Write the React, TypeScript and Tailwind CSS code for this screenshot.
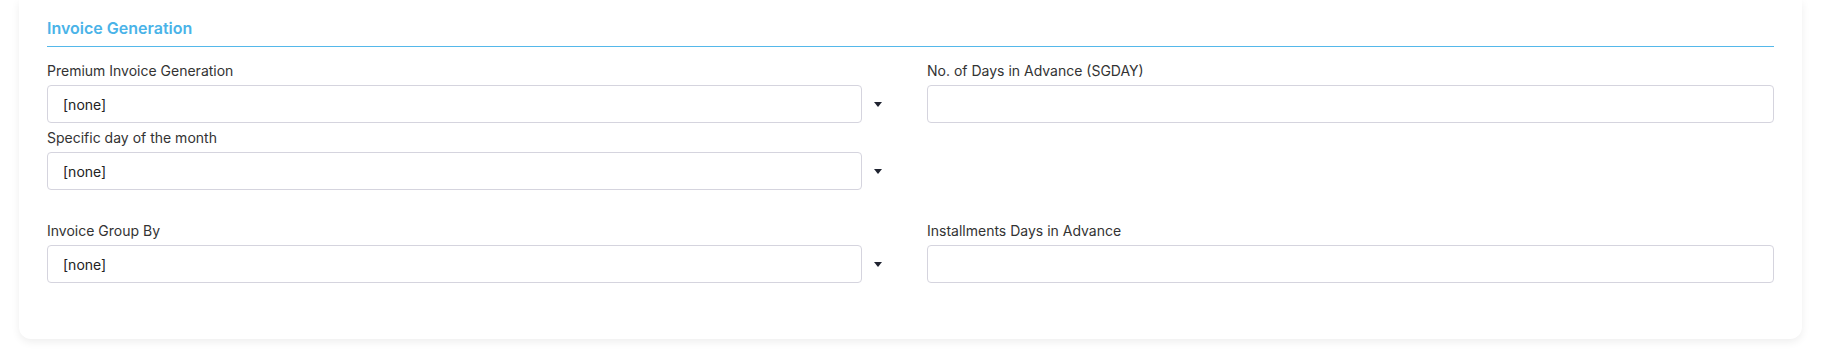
import React from 'react';

const font = { fontFamily: 'Inter, "Noto Sans", sans-serif' };

interface FieldProps {
  label: string;
  select?: boolean;
  value?: string;
}

const Field: React.FC<FieldProps> = ({ label, select, value }) => {
  return (
    <div className="flex flex-col">
      <label className="text-[14px] leading-[20px] text-[#333] mb-[4px]">{label}</label>
      {select ? (
        <div className="flex items-center">
          <div className="flex-1 h-[38px] border border-[#d5d4de] rounded-[4px] bg-white flex items-center pl-[15px] text-[14px] text-[#222]">
            {value}
          </div>
          <div className="w-[32px] flex items-center justify-center">
            {/* caret */}
            <svg width="8" height="5" viewBox="0 0 8 5">
              <path d="M0 0 H8 L4 5 Z" fill="#1f2330" />
            </svg>
          </div>
        </div>
      ) : (
        <div className="h-[38px] border border-[#d5d4de] rounded-[4px] bg-white" />
      )}
    </div>
  );
};

const App: React.FC = () => {
  return (
    <div className="min-h-[354px] w-full bg-white" style={font}>
      <div className="px-[19px]">
        <div className="bg-white rounded-b-[12px] shadow-[0_3px_8px_rgba(0,0,0,0.07)] px-[28px] pt-[16px] pb-[56px]">
          {/* Section header */}
          <h2 className="text-[16px] leading-[24px] font-semibold text-[#4ab3e8] pb-[6px] border-b border-[#55b8ea]">
            Invoice Generation
          </h2>

          <div className="grid grid-cols-2 gap-x-[33px] mt-[14px]">
            <div className="flex flex-col gap-[5px]">
              <Field label="Premium Invoice Generation" select value="[none]" />
              <Field label="Specific day of the month" select value="[none]" />
            </div>
            <div>
              <Field label="No. of Days in Advance (SGDAY)" />
            </div>
          </div>

          <div className="grid grid-cols-2 gap-x-[33px] mt-[31px]">
            <Field label="Invoice Group By" select value="[none]" />
            <Field label="Installments Days in Advance" />
          </div>
        </div>
      </div>
    </div>
  );
};

export default App;
